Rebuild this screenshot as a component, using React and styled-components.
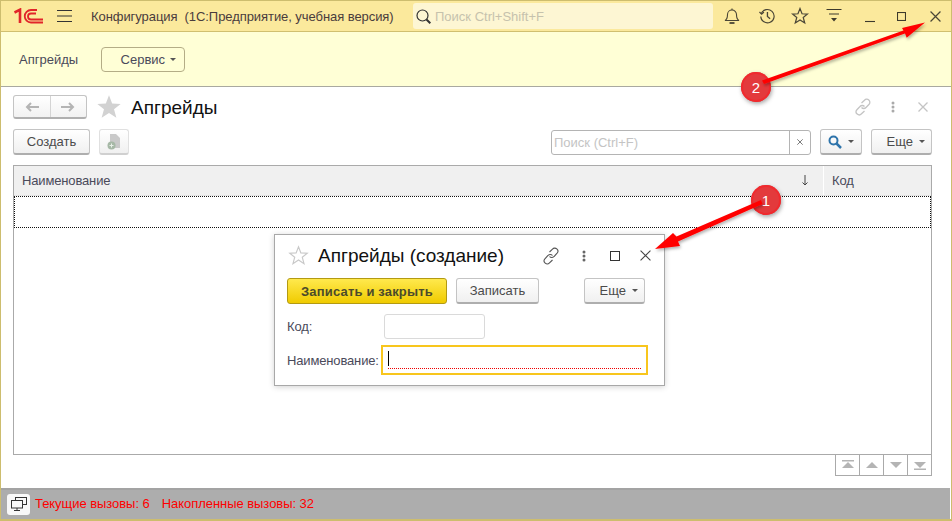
import React from 'react';
import styled, { createGlobalStyle } from 'styled-components';

const Global = createGlobalStyle`
  html, body { margin: 0; padding: 0; background: #fff; }
  body { font-family: "Liberation Sans", Arial, sans-serif; font-size: 13px; color: #4b4b4b; }
  * { box-sizing: border-box; }
`;

const Frame = styled.div`
  position: relative; width: 952px; height: 521px; overflow: hidden;
  display: flex; flex-direction: column;
  border: solid #cdbd6e; border-width: 1px 1px 2px 1px; background: #fff;
`;
const TopBar = styled.div`
  height: 31px; flex: none; background: #fbe99c; border-bottom: 1px solid #d0bf70;
  display: flex; align-items: center; padding-left: 13px; color: #4a3c3c;
`;
const Logo = styled.svg`width: 32px; height: 16px; flex: none;`;
const Burger = styled.svg`width: 16px; height: 14px; flex: none; margin-left: 11px;`;
const AppTitle = styled.div`margin-left: 18px; white-space: pre; width: 322px; flex: none; letter-spacing: -.065px;`;
const GlobalSearch = styled.div`
  width: 300px; height: 26px; flex: none; background: #fdf6d3; border-radius: 3px;
  display: flex; align-items: center; padding-left: 3px; color: #c6c2ad; gap: 4px;
`;
const TopIcons = styled.div`display: flex; align-items: center; flex: none; padding-left: 2px;`;
const TopIcon = styled.span`width: ${p => p.$w}px; display: flex; justify-content: center; flex: none;`;

const SectionPanel = styled.div`
  height: 55px; flex: none; background: #ffffd6; border-bottom: 1px solid #a9a9a0;
  display: flex; align-items: center; padding-left: 18px; color: #4a4a5a;
`;
const ServiceBtn = styled.div`
  margin-left: 23px; width: 84px; height: 25px; border: 1px solid #b4ad86; border-radius: 4px;
  display: flex; align-items: center; justify-content: flex-end; padding-right: 8px; gap: 5px;
`;
const Caret = styled.i`
  display: inline-block; width: 0; height: 0; flex: none;
  border-left: 3px solid transparent; border-right: 3px solid transparent;
  border-top: 3px solid ${p => p.$c || '#555'};
`;

const Content = styled.div`
  flex: 1; min-height: 0; display: flex; flex-direction: column; padding: 7px 19px 0 12px; background: #fff;
`;
const TitleRow = styled.div`height: 26px; flex: none; display: flex; align-items: center;`;
const NavGroup = styled.div`
  width: 74px; height: 24px; display: flex; border: 1px solid #c4c4c4; border-bottom: 2px solid #b0b0b0; border-radius: 3px;
  background: linear-gradient(#fff, #f2f2f2);
`;
const NavBtn = styled.div`
  flex: 1; display: flex; align-items: center; justify-content: center;
  & + & { border-left: 1px solid #d4d4d4; }
`;
const BigStar = styled.svg`width: 28px; height: 28px; margin-left: 8px; flex: none;`;
const PageTitle = styled.div`font-size: 19px; color: #111; margin: 1px 0 0 8px; flex: 1;`;
const HeadIcons = styled.div`display: flex; align-items: center; margin: -1px -6px 0 0;`;
const HeadIcon = styled.span`width: 30px; display: flex; justify-content: center;`;

const CommandBar = styled.div`height: 26px; flex: none; margin-top: 9px; display: flex; align-items: center;`;
const Button = styled.div`
  height: 26px; width: ${p => p.$w}px; flex: none; background: linear-gradient(#fff, #f0f0f0);
  border: 1px solid #c4c4c4; border-bottom: 2px solid #aeaeae; border-radius: 3px; margin-left: ${p => p.$ml || 0}px;
  display: flex; align-items: center; justify-content: ${p => p.$end ? 'flex-end' : 'center'};
  padding-right: ${p => p.$end ? 6 : 0}px; gap: 6px; color: #4b4b4b;
`;
const SoftIconBtn = styled(Button)`border-color: #e0e0e0; border-bottom-color: #d0d0d0;`;
const Search = styled.div`
  margin-left: auto; width: 260px; height: 25px; display: flex; border: 1px solid #b4b4b4; border-radius: 3px; background: #fff;
`;
const SearchInput = styled.div`flex: 1; color: #c4c4c4; padding-left: 2px; line-height: 23px;`;
const SearchClear = styled.div`width: 21px; border-left: 1px solid #b4b4b4; display: flex; align-items: center; justify-content: center;`;

const Table = styled.div`
  margin-top: 10px; height: 290px; flex: none; border: 1px solid #aaa; display: flex; flex-direction: column;
`;
const TableHead = styled.div`height: 30px; flex: none; background: #f0f0f0; display: flex; border-bottom: 1px solid #e4e4e4;`;
const HeadCell = styled.div`
  width: ${p => p.$w}px; flex: ${p => p.$w ? 'none' : 1}; display: flex; align-items: center; justify-content: space-between;
  padding: 0 14px 0 8px; color: #4a4a5a; letter-spacing: -.15px; & + & { border-left: 1px solid #fff; }
`;
const FocusRow = styled.div`height: 32px; flex: none; border: 1px dotted #111;`;
const Pager = styled.div`align-self: flex-end; display: flex; height: 21px; flex: none;`;
const PagerBtn = styled.div`
  width: 24px; height: 21px; border: 1px solid #aaa; border-top: none; display: flex; align-items: center; justify-content: center;
  &:first-child { width: 25px; }
  & + & { border-left: none; }
`;

const Status = styled.div`
  height: 31px; flex: none; margin-right: 1px; margin-top: auto;
  background: linear-gradient(#a3a3a3, #a3a3a3) no-repeat 0 0 / 899px 2px, #adadad;
  display: flex; align-items: center; padding: 2px 0 0 6px; color: #f00; letter-spacing: -.05px;
`;
const MonitorBtn = styled.div`
  width: 23px; height: 21px; background: #f8f8f8; border-radius: 3px; display: flex; align-items: center; justify-content: center; margin-right: 5px;
`;
const StatusText = styled.span`margin-right: 12px; margin-top: -3px;`;

const Dialog = styled.div`
  position: absolute; left: 273px; top: 233px; width: 391px; height: 152px; background: #fff; border: 1px solid #a8a8a8;
  box-shadow: 0 1px 6px rgba(0,0,0,.18); display: flex; flex-direction: column; padding: 0 12px;
`;
const DialogHead = styled.div`height: 41px; flex: none; display: flex; align-items: center; margin: 0 -8px 2px 0; padding-left: 1px;`;
const DialogTitle = styled.div`font-size: 19px; color: #111; margin-left: 9px; flex: 1;`;
const DialogIcon = styled.span`width: ${p => p.$w}px; display: flex; justify-content: center; flex: none;`;
const DialogBar = styled.div`display: flex; align-items: center; height: 26px; flex: none;`;
const PrimaryBtn = styled.div`
  width: 160px; height: 26px; flex: none; border: 1px solid #b39a12; border-radius: 3px; background: linear-gradient(#ffe94d, #f0cb00);
  display: flex; align-items: center; justify-content: center; font-weight: 700; letter-spacing: .17px; color: #4b4b2b;
`;
const FormRow = styled.div`display: flex; align-items: center; margin-top: ${p => p.$mt}px; color: #4a4a5a; letter-spacing: -.15px;`;
const Label = styled.div`width: ${p => p.$w}px; flex: none;`;
const CodeInput = styled.div`width: 101px; height: 25px; border: 1px solid #dadada; border-radius: 3px;`;
const NameInput = styled.div`
  width: 267px; height: 30px; border: 2px solid #f8c61d; position: relative;
  display: flex; align-items: center; padding-left: 5px;
  &::after { content: ''; position: absolute; left: 5px; right: 5px; bottom: 4px; border-bottom: 1px dotted #e00; }
`;
const Cursor = styled.i`width: 1px; height: 15px; background: #000; display: block; margin-top: -3px;`;

const Overlay = styled.svg`position: absolute; left: -1px; top: -1px; pointer-events: none;`;
const Badge = styled.div`
  position: absolute; left: ${p => p.$x}px; top: ${p => p.$y}px; width: 30px; height: 30px; border-radius: 50%;
  background: #e33a3c; box-shadow: 1px 2px 4px rgba(0,0,0,.35), inset 0 0 0 2px #f02a2e;
  color: #fff; font-size: 15px; display: flex; align-items: center; justify-content: center;
`;

const St = { fill: 'none', stroke: '#4a4636', strokeWidth: 1.1 };
const Grey = { fill: 'none', stroke: '#c4c4c4', strokeWidth: 1.3 };

const Link = ({ s = Grey, size = 18 }) => (
  <svg width={size} height={size} viewBox="0 0 18 18" {...s}>
    <path d="M7.5 5 10.5 2.2a3 3 0 0 1 4.6 4L12 9.5a3 3 0 0 1-4.5 0" />
    <path d="M10.5 13 7.5 15.8a3 3 0 0 1-4.6-4L6 8.5a3 3 0 0 1 4.5 0" />
  </svg>
);
const Dots = ({ c = '#aaa' }) => (
  <svg width="4" height="12" viewBox="0 0 4 12" fill={c}><circle cx="2" cy="2" r="1.5" /><circle cx="2" cy="6" r="1.5" /><circle cx="2" cy="10" r="1.5" /></svg>
);
const Cross = ({ s = Grey, size = 10 }) => (
  <svg width={size} height={size} viewBox="0 0 10 10" {...s}><path d="M.5.5l9 9M9.5.5l-9 9" /></svg>
);
const starPts = "12,2 14.7,9 22,9.4 16.3,14 18.3,21.3 12,17.2 5.7,21.3 7.7,14 2,9.4 9.3,9";
const PagerIcon = ({ up, bar }) => (
  <svg width="14" height="10" viewBox="0 0 14 10" fill="#b4b4b4">
    {up ? <path d="M7 2 13 8H1z" /> : <path d="M7 8 1 2H13z" />}
    {bar && (up ? <rect x="1" y="0" width="12" height="1.5" /> : <rect x="1" y="8.5" width="12" height="1.5" />)}
  </svg>
);

export default function App() {
  return (
    <>
      <Global />
      <Frame>
        <TopBar>
          <Logo viewBox="0 0 32 16">
            <g fill="none" stroke="#e1242a">
              <path d="M.5 4.500 6 1.700V15" strokeWidth="2.600" />
              <path d="M23 2H17a6.250 6.250 0 0 0 0 12.500H29" strokeWidth="1.800" />
              <path d="M22 5.500H17a3 3 0 0 0 0 6H29" strokeWidth="1.800" />
            </g>
          </Logo>
          <Burger viewBox="0 0 16 14"><path d="M0 1.500H15M0 7H15M0 12.500H15" stroke="#333" strokeWidth="1.200" fill="none" /></Burger>
          <AppTitle>Конфигурация  (1С:Предприятие, учебная версия)</AppTitle>
          <GlobalSearch>
            <svg width="15" height="15" viewBox="0 0 15 15" fill="none" stroke="#333" strokeWidth="1.200"><circle cx="6.500" cy="6.500" r="5.500" /><path d="M10.500 10.500 14.300 14.300" strokeWidth="2" /></svg>
            Поиск Ctrl+Shift+F
          </GlobalSearch>
          <TopIcons>
            <TopIcon $w={33}>
              <svg width="16" height="17" viewBox="0 0 16 17" {...St}><path d="M1 12.500c2-1 2.500-3 2.500-6a4.500 4.500 0 0 1 9 0c0 3 .5 5 2.500 6z" /><path d="M8 .5v1.500" /><path d="M5.500 15h5" strokeWidth="1.800" /></svg>
            </TopIcon>
            <TopIcon $w={37}>
              <svg width="16" height="16" viewBox="0 0 18 18" {...St} strokeWidth="1.300"><path d="M2.500 6.500a7.500 7.500 0 1 1-.5 3" /><path d="M.5 4.500 3 7l2.500-2.500" /><path d="M9.500 4.500v5l3 2.500" strokeWidth="1.500" /></svg>
            </TopIcon>
            <TopIcon $w={29}>
              <svg width="18" height="18" viewBox="0 0 24 24" {...St} strokeWidth="1.600"><polygon points={starPts} /></svg>
            </TopIcon>
            <TopIcon $w={39}>
              <svg width="16" height="14" viewBox="0 0 16 14" fill="#3d3a2c"><path d="M.5 0h15v1H.5zM3 4.500h10v1H3zM5 9h6L8 12.500z" /></svg>
            </TopIcon>
            <TopIcon $w={33}>
              <svg width="10" height="14" viewBox="0 0 10 14"><path d="M0 12.500H10" stroke="#3d3a2c" strokeWidth="1.100" /></svg>
            </TopIcon>
            <TopIcon $w={31}>
              <svg width="9" height="9" viewBox="0 0 9 9" fill="none" stroke="#3d3a2c" strokeWidth="1.100"><rect x=".5" y=".5" width="8" height="8" /></svg>
            </TopIcon>
            <TopIcon $w={37}><Cross s={St} size={11} /></TopIcon>
          </TopIcons>
        </TopBar>
        <SectionPanel>
          Апгрейды
          <ServiceBtn>Сервис <Caret /></ServiceBtn>
        </SectionPanel>
        <Content>
          <TitleRow>
            <NavGroup>
              <NavBtn><svg width="14" height="10" viewBox="0 0 14 10" fill="none" stroke="#b4b4b4" strokeWidth="2"><path d="M14 5H2M6 1 2 5l4 4" /></svg></NavBtn>
              <NavBtn><svg width="14" height="10" viewBox="0 0 14 10" fill="none" stroke="#b4b4b4" strokeWidth="2"><path d="M0 5H12M8 1l4 4-4 4" /></svg></NavBtn>
            </NavGroup>
            <BigStar viewBox="0 0 24 24"><polygon points={starPts} fill="#d2d2d2" /></BigStar>
            <PageTitle>Апгрейды</PageTitle>
            <HeadIcons>
              <HeadIcon><Link /></HeadIcon>
              <HeadIcon><Dots /></HeadIcon>
              <HeadIcon><Cross /></HeadIcon>
            </HeadIcons>
          </TitleRow>
          <CommandBar>
            <Button $w={77}>Создать</Button>
            <SoftIconBtn $w={30} $ml={9}>
              <svg width="14" height="17" viewBox="0 0 14 17"><path d="M3 1h6l4 4v10H3z" fill="#c9c9c9" /><circle cx="4.500" cy="12.500" r="4" fill="#a6b8a6" /><path d="M2.500 12.500h4M4.500 10.500v4" stroke="#e8f0e8" strokeWidth="1" /></svg>
            </SoftIconBtn>
            <Search>
              <SearchInput>Поиск (Ctrl+F)</SearchInput>
              <SearchClear><Cross s={{ fill: 'none', stroke: '#555', strokeWidth: 1.300 }} size={6} /></SearchClear>
            </Search>
            <Button $w={42} $ml={9}>
              <svg width="14" height="14" viewBox="0 0 14 14" fill="none" stroke="#2e74ab"><circle cx="5.500" cy="5.500" r="4" strokeWidth="2" /><path d="M8.500 8.500 13 13" strokeWidth="2.500" /></svg>
              <Caret />
            </Button>
            <Button $w={61} $ml={9} $end>Еще <Caret /></Button>
          </CommandBar>
          <Table>
            <TableHead>
              <HeadCell>Наименование
                <svg width="8" height="11" viewBox="0 0 8 11" fill="none" stroke="#444"><path d="M4 0V10M1.500 7.500 4 10 6.500 7.500" /></svg>
              </HeadCell>
              <HeadCell $w={108}>Код</HeadCell>
            </TableHead>
            <FocusRow />
          </Table>
          <Pager>
            <PagerBtn><PagerIcon up bar /></PagerBtn>
            <PagerBtn><PagerIcon up /></PagerBtn>
            <PagerBtn><PagerIcon /></PagerBtn>
            <PagerBtn><PagerIcon bar /></PagerBtn>
          </Pager>
        </Content>
        <Status>
          <MonitorBtn>
            <svg width="16" height="15" viewBox="0 0 16 15" fill="none" stroke="#333" strokeWidth="1"><rect x="4.500" y=".5" width="11" height="7" fill="#f8f8f8" /><rect x=".5" y="3.500" width="11" height="7.500" fill="#f8f8f8" /><path d="M6 11v2.500M3 13.500h6" /></svg>
          </MonitorBtn>
          <StatusText>Текущие вызовы: 6</StatusText>
          <StatusText>Накопленные вызовы: 32</StatusText>
        </Status>

        <Dialog>
          <DialogHead>
            <svg width="21" height="21" viewBox="0 0 24 24" fill="#fff" stroke="#c8c8c8" strokeWidth="1.300"><polygon points={starPts} /></svg>
            <DialogTitle>Апгрейды (создание)</DialogTitle>
            <DialogIcon $w={34}><Link s={{ fill: 'none', stroke: '#555', strokeWidth: 1.100 }} /></DialogIcon>
            <DialogIcon $w={32}><Dots c="#666" /></DialogIcon>
            <DialogIcon $w={30}><svg width="10" height="10" viewBox="0 0 10 10" fill="none" stroke="#333"><rect x=".5" y=".5" width="9" height="9" /></svg></DialogIcon>
            <DialogIcon $w={30}><Cross s={{ fill: 'none', stroke: '#444', strokeWidth: 1.000 }} size={11} /></DialogIcon>
          </DialogHead>
          <DialogBar>
            <PrimaryBtn>Записать и закрыть</PrimaryBtn>
            <Button $w={83} $ml={9}>Записать</Button>
            <Button $w={61} $ml={45} $end>Еще <Caret /></Button>
          </DialogBar>
          <FormRow $mt={10}><Label $w={97}>Код:</Label><CodeInput /></FormRow>
          <FormRow $mt={6}><Label $w={94}>Наименование:</Label><NameInput><Cursor /></NameInput></FormRow>
        </Dialog>

        <Badge $x={740} $y={71}>2</Badge>
        <Badge $x={750} $y={184}>1</Badge>
        <Overlay width="952" height="521" viewBox="0 0 952 521">
          <defs><filter id="sh" x="-10%" y="-30%" width="120%" height="160%"><feDropShadow dx="1" dy="2" stdDeviation="1.500" floodOpacity=".3" /></filter></defs>
          <g filter="url(#sh)" fill="#f00" stroke="none">
            <path d="M761 200 676.500 236.500 673 233 655 249 680 246 678 241.500 762.500 204z" />
            <path d="M762 80.500 903.500 30.500 902 28 925 22.500 906.700 37.700 905 33.500 764 84z" />
          </g>
        </Overlay>
      </Frame>
    </>
  );
}
